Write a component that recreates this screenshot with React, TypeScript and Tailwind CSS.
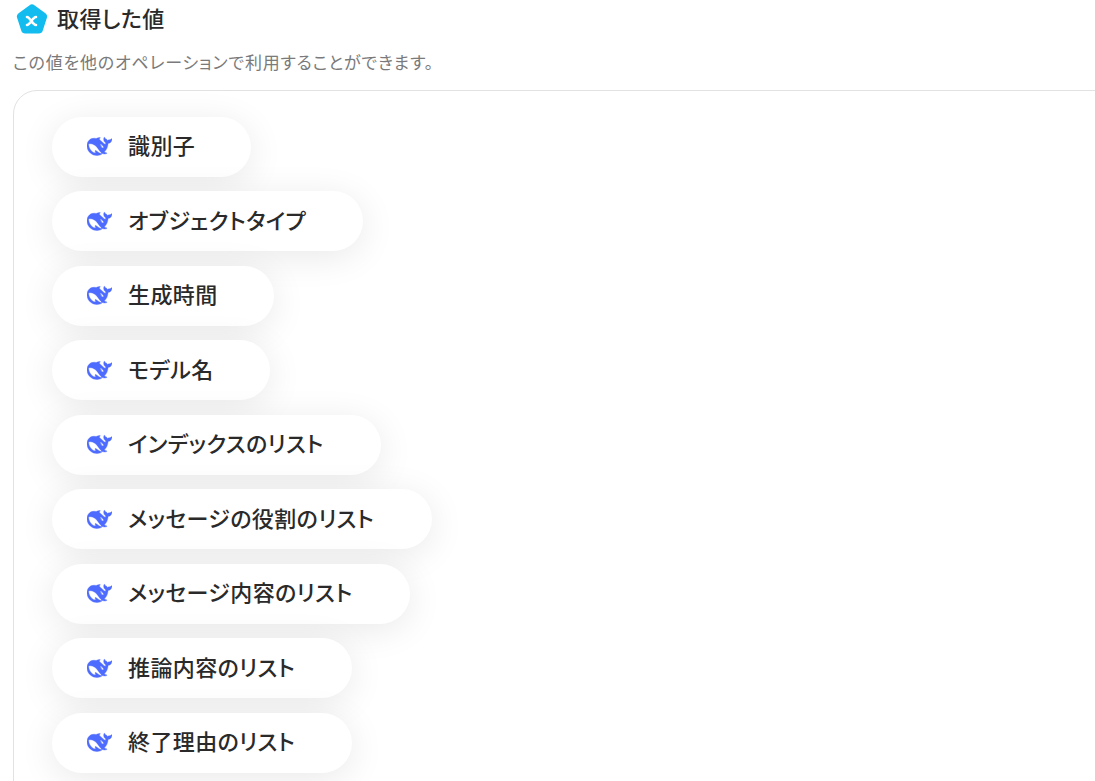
const items = [
  { label: "識別子", width: "w-[199px]" },
  { label: "オブジェクトタイプ", width: "w-[311px]" },
  { label: "生成時間", width: "w-[222px]" },
  { label: "モデル名", width: "w-[218px]" },
  { label: "インデックスのリスト", width: "w-[329px]" },
  { label: "メッセージの役割のリスト", width: "w-[380px]" },
  { label: "メッセージ内容のリスト", width: "w-[358px]" },
  { label: "推論内容のリスト", width: "w-[300px]" },
  { label: "終了理由のリスト", width: "w-[300px]" },
];

function WhaleIcon() {
  return (
    <svg viewBox="0 0 24 24" className="h-[25px] w-[25px] shrink-0" fill="#4d6bfe" stroke="#4d6bfe" strokeWidth="0.35">
      <path d="M23.748 4.482c-.254-.124-.364.113-.512.234-.051.039-.094.09-.137.136-.372.397-.806.657-1.373.626-.829-.046-1.537.214-2.163.848-.133-.782-.575-1.248-1.247-1.548-.352-.156-.708-.311-.955-.65-.172-.241-.219-.51-.305-.774-.055-.16-.11-.323-.293-.35-.2-.031-.278.136-.356.276-.313.572-.434 1.202-.422 1.84.027 1.436.633 2.58 1.838 3.393.137.093.172.187.129.323-.082.28-.18.552-.266.833-.055.179-.137.217-.329.14a5.526 5.526 0 01-1.736-1.18c-.857-.828-1.631-1.742-2.597-2.458a11.365 11.365 0 00-.689-.471c-.985-.957.13-1.743.388-1.836.27-.098.093-.432-.779-.428-.872.004-1.67.295-2.687.684a3.055 3.055 0 01-.465.137 9.597 9.597 0 00-2.883-.102c-1.885.21-3.39 1.102-4.497 2.623C.082 8.606-.231 10.684.152 12.85c.403 2.284 1.569 4.175 3.36 5.653 1.858 1.533 3.997 2.284 6.438 2.14 1.482-.085 3.133-.284 4.994-1.86.47.234.962.327 1.78.397.63.059 1.236-.03 1.705-.128.735-.156.684-.837.419-.961-2.155-1.004-1.682-.595-2.113-.926 1.096-1.296 2.746-2.642 3.392-7.003.05-.347.007-.565 0-.845-.004-.17.035-.237.23-.256a4.173 4.173 0 001.545-.475c1.396-.763 1.96-2.015 2.093-3.517.02-.23-.004-.467-.247-.588zM11.581 18c-2.089-1.642-3.102-2.183-3.52-2.16-.392.024-.321.471-.235.763.09.288.207.486.371.739.114.167.192.416-.113.603-.673.416-1.842-.14-1.897-.167-1.361-.802-2.5-1.86-3.301-3.307-.774-1.393-1.224-2.887-1.298-4.482-.02-.386.093-.522.477-.592a4.696 4.696 0 011.529-.039c2.132.312 3.946 1.265 5.468 2.774.868.86 1.525 1.887 2.202 2.891.72 1.066 1.494 2.082 2.48 2.914.348.292.625.514.891.677-.802.09-2.14.11-3.054-.614zm1-6.44a.306.306 0 01.415-.287.302.302 0 01.2.288.306.306 0 01-.31.307.303.303 0 01-.304-.308zm3.11 1.596c-.2.081-.399.151-.59.16a1.245 1.245 0 01-.798-.254c-.274-.23-.47-.358-.552-.758a1.73 1.73 0 01.016-.588c.07-.327-.008-.537-.239-.727-.187-.156-.426-.199-.688-.199a.559.559 0 01-.254-.078c-.11-.054-.2-.19-.114-.358.028-.054.16-.186.192-.21.356-.202.767-.136 1.146.016.352.144.618.408 1.001.782.391.451.462.576.685.914.176.265.336.537.445.848.067.195-.019.354-.25.452z" />
    </svg>
  );
}

function Logo() {
  return (
    <svg viewBox="0 0 32 31" className="h-[31px] w-8 shrink-0">
      <path
        d="M13.6 1.2a4 4 0 0 1 4.8 0l11 8a4 4 0 0 1 1.5 4.5l-4.2 13a4 4 0 0 1-3.8 2.8H9.1a4 4 0 0 1-3.8-2.8l-4.2-13a4 4 0 0 1 1.5-4.5z"
        fill="#12bcee"
      />
      <path d="M11 13c3 0 5.500 8 9 8M20 13c-3.500 0-6 8-9 8" fill="none" stroke="#fff" strokeWidth="2.6" strokeLinecap="round" />
    </svg>
  );
}

export default function App() {
  return (
    <div className="h-[781px] overflow-hidden bg-white pt-1 font-['Noto_Sans_CJK_JP',sans-serif] [font-feature-settings:'palt']">
      {/* Header */}
      <div className="flex h-[31px] items-center gap-[9px] pl-4">
        <Logo />
        <h2 className="mb-[5px] text-[22px] leading-[30px] font-medium tracking-[0.4px] text-[#2a2a2a]">取得した値</h2>
      </div>
      <p className="mt-[15px] pl-[13px] text-[17px] leading-6 tracking-[0.8px] text-[#7a7a7a]">
        この値を他のオペレーションで利用することができます。
      </p>

      {/* Card */}
      <div className="mt-[16px] ml-[13px] h-[900px] w-[1200px] rounded-tl-[24px] border border-[#e2e2e2] pt-[25.9px] pl-[38px]">
        <ul className="flex flex-col gap-[14.5px]">
          {items.map((item) => (
            <li
              key={item.label}
              className={`flex h-[60px] items-center gap-[16px] rounded-full bg-white pl-[35px] shadow-[0_6px_36px_rgba(0,0,0,0.09)] ${item.width}`}
            >
              <WhaleIcon />
              <span className="mb-[4px] text-[22px] font-medium tracking-[0.4px] whitespace-nowrap text-[#2a2a2a]">
                {item.label}
              </span>
            </li>
          ))}
        </ul>
      </div>
    </div>
  );
}
